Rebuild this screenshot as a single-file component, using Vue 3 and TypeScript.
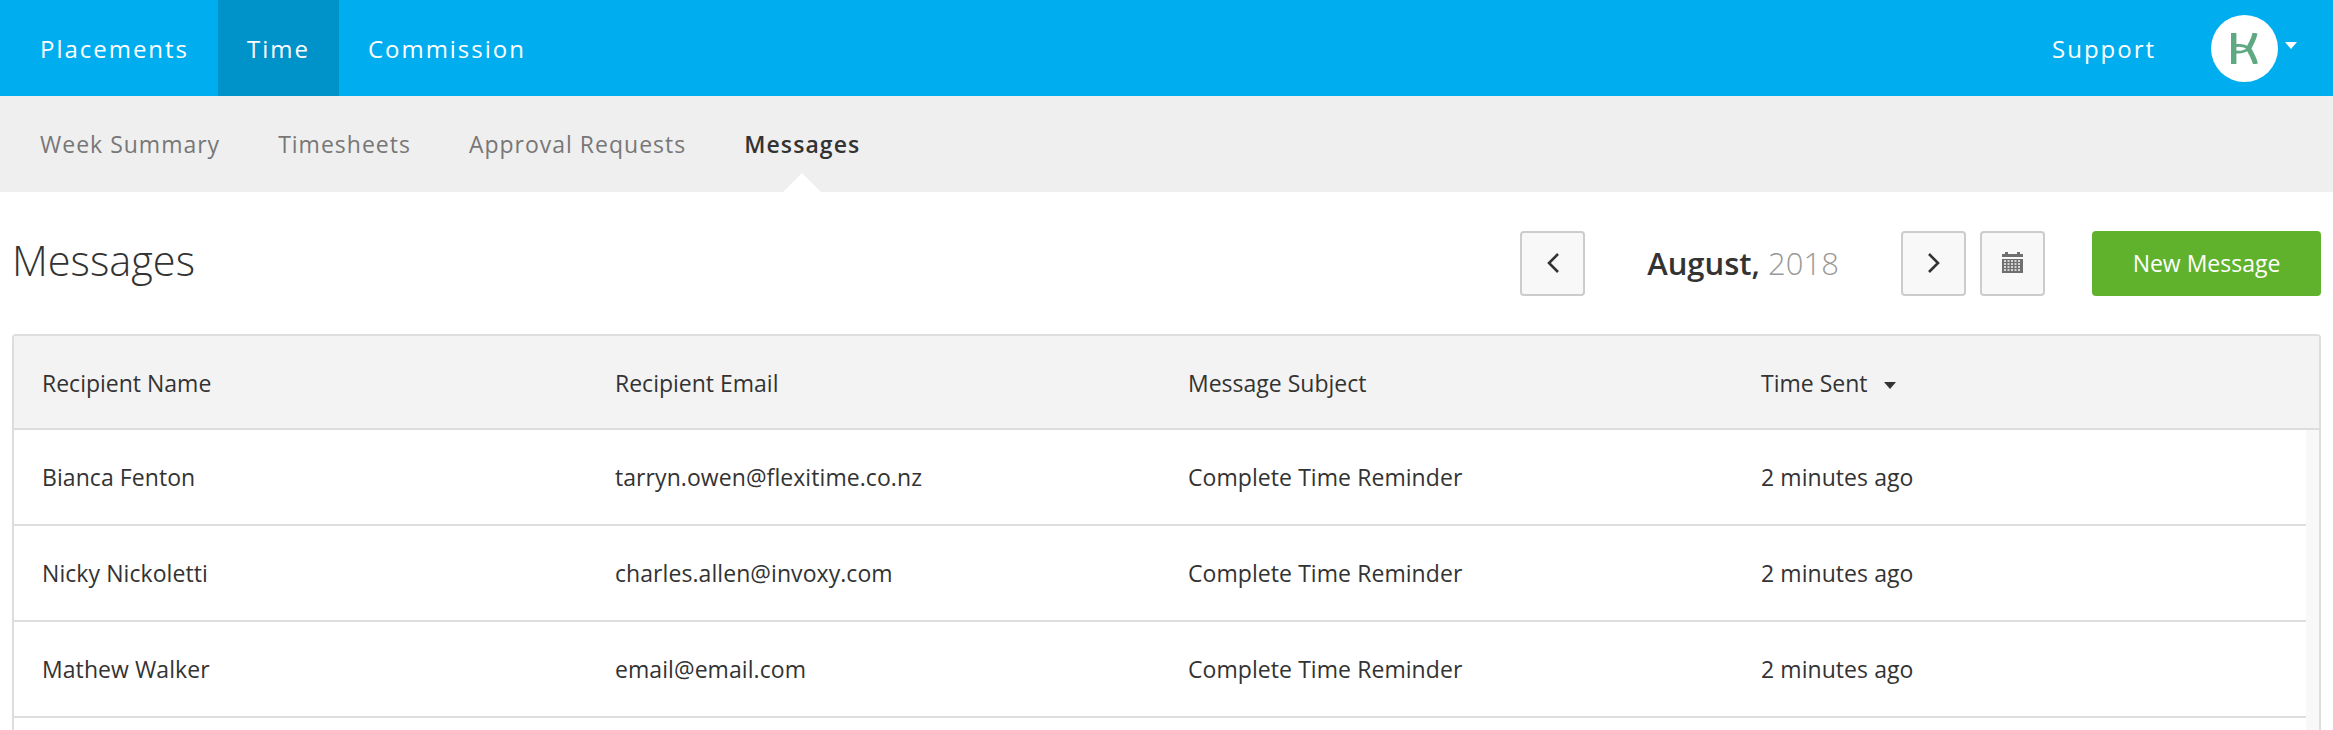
<script setup lang="ts">
interface Message { name: string; email: string; subject: string; sent: string }
const mainNav: { label: string; active?: boolean }[] = [
  { label: 'Placements' },
  { label: 'Time', active: true },
  { label: 'Commission' },
]
const subNav: { label: string; active?: boolean }[] = [
  { label: 'Week Summary' },
  { label: 'Timesheets' },
  { label: 'Approval Requests' },
  { label: 'Messages', active: true },
]
const columns = ['Recipient Name', 'Recipient Email', 'Message Subject']
const rows: Message[] = [
  { name: 'Bianca Fenton', email: 'tarryn.owen@flexitime.co.nz', subject: 'Complete Time Reminder', sent: '2 minutes ago' },
  { name: 'Nicky Nickoletti', email: 'charles.allen@invoxy.com', subject: 'Complete Time Reminder', sent: '2 minutes ago' },
  { name: 'Mathew Walker', email: 'email@email.com', subject: 'Complete Time Reminder', sent: '2 minutes ago' },
]
</script>

<template>
  <div class="page">
    <header class="topbar">
      <nav class="main-nav">
        <a v-for="item in mainNav" :key="item.label" class="main-link" :class="{ active: item.active }">{{ item.label }}</a>
      </nav>
      <div class="top-right">
        <a class="support">Support</a>
        <div class="avatar">
          <svg width="27" height="31" viewBox="0 0 27 31" fill="none" stroke="#5fa982">
            <path stroke-width="5.4" d="M2.7 0V31" />
            <path stroke-width="5" d="M24 0C23 6 20 11 17.5 15.5C20 20 23 25 24.5 31" />
            <path stroke-width="2.8" d="M18 15.5C14 12.5 9 12 5 12.5M18 15.5C14 18.5 9 19.5 5 19" />
          </svg>
        </div>
        <span class="avatar-caret"></span>
      </div>
    </header>
    <nav class="sub-nav">
      <a v-for="item in subNav" :key="item.label" class="sub-link" :class="{ active: item.active }">{{ item.label }}</a>
    </nav>
    <section class="toolbar">
      <h1 class="title">Messages</h1>
      <div class="controls">
        <button class="icon-btn" type="button" aria-label="Previous month">
          <svg width="14" height="24" viewBox="0 0 14 24" fill="none" stroke="#333" stroke-width="2.6"><path d="M12 3L3 12L12 21" /></svg>
        </button>
        <div class="period"><strong>August,</strong> <span>2018</span></div>
        <button class="icon-btn" type="button" aria-label="Next month">
          <svg width="14" height="24" viewBox="0 0 14 24" fill="none" stroke="#333" stroke-width="2.6"><path d="M2 3L11 12L2 21" /></svg>
        </button>
        <button class="icon-btn cal" type="button" aria-label="Calendar">
          <svg class="cal-icon" width="21" height="21" viewBox="0 0 21 21">
            <path fill="#6f6f6f" d="M0 2H3V0H6V2H15V0H18V2H21V5H0ZM0 7H21V21H0Z" />
            <path stroke="#f8f8f8" stroke-width="1.6" stroke-dasharray="2 1.5" fill="none" d="M2 9H19M2 12H19M2 15H19M2 18H19" />
          </svg>
        </button>
        <button class="new-btn" type="button">New Message</button>
      </div>
    </section>
    <section class="panel">
      <div class="row head">
        <div v-for="c in columns" :key="c" class="cell">{{ c }}</div>
        <div class="cell">Time Sent<span class="sort-caret"></span></div>
      </div>
      <div class="body">
        <div class="rows">
          <div v-for="r in rows" :key="r.email" class="row">
            <div class="cell">{{ r.name }}</div>
            <div class="cell">{{ r.email }}</div>
            <div class="cell">{{ r.subject }}</div>
            <div class="cell">{{ r.sent }}</div>
          </div>
        </div>
        <div class="track"></div>
      </div>
    </section>
  </div>
</template>

<style>
html, body { margin: 0; background: #fff; overflow: hidden; }
</style>

<style scoped>
.page { height: 730px; overflow: hidden; display: flex; flex-direction: column; font-family: "Open Sans", sans-serif; color: #333; }
.topbar { height: 96px; flex: none; background: #00aeef; display: flex; justify-content: space-between; }
.main-nav { display: flex; }
.main-link { height: 96px; padding: 0 29px 0 40px; line-height: 98px; color: #fff; font-size: 24px; letter-spacing: 1.98px; }
.main-link + .main-link { padding: 0 29px; }
.main-link.active { background: #0093c9; }
.top-right { display: flex; align-items: center; padding-right: 36px; }
.support { color: #fff; font-size: 24px; letter-spacing: 1.98px; margin-right: 55px; }
.avatar { width: 67px; height: 67px; border-radius: 50%; background: #fff; display: flex; align-items: center; justify-content: center; }
.avatar-caret { width: 0; height: 0; border: 6px solid transparent; border-top: 7px solid #fff; border-bottom: 0; margin-left: 7px; margin-top: -5px; }
.sub-nav { height: 96px; flex: none; background: #efefef; display: flex; gap: 58px; padding-left: 40px; align-items: center; }
.sub-link { position: relative; font-size: 23px; letter-spacing: 1px; color: #777; line-height: 96px; }
.sub-link.active { color: #333; font-weight: 600; letter-spacing: 1.1px; }
.sub-link.active::after { content: ""; position: absolute; left: 50%; bottom: 0; margin-left: -19px; border: 19px solid transparent; border-top: 0; border-bottom: 19px solid #fff; }
.toolbar { flex: none; height: 142px; display: flex; align-items: center; justify-content: space-between; padding: 0 12px; }
.title { margin: -6px 0 0; font-size: 41.5px; font-weight: 300; color: #333; }
.controls { display: flex; align-items: center; }
.icon-btn { width: 65px; height: 65px; box-sizing: border-box; border: 2px solid #ccc; border-radius: 4px; background: #f8f8f8; padding: 0; display: flex; align-items: center; justify-content: center; }
.cal { margin-left: 14px; }
.cal-icon { margin-bottom: 2px; }
.period { width: 316px; text-align: center; font-size: 31px; }
.period strong { font-weight: 600; color: #333; }
.period span { font-weight: 300; color: #999; }
.new-btn { width: 229px; height: 65px; margin-left: 47px; border: 0; border-radius: 4px; background: #60b22d; color: #fff; font: 400 23px "Open Sans", sans-serif; }
.panel { flex: 1; margin: 0 12px; border: 2px solid #ddd; border-bottom: 0; border-radius: 4px 4px 0 0; display: flex; flex-direction: column; min-height: 0; }
.row { display: grid; grid-template-columns: repeat(4, 1fr); align-items: center; height: 96px; box-sizing: border-box; border-bottom: 2px solid #ddd; font-size: 23px; letter-spacing: 0.07px; }
.head { height: 94px; padding-top: 2px; padding-right: 13px; background: #f3f3f3; flex: none; letter-spacing: 0; }
.cell { padding-left: 28px; }
.sort-caret { display: inline-block; width: 0; height: 0; margin-left: 16px; vertical-align: 3px; border: 6px solid transparent; border-top: 7px solid #333; border-bottom: 0; }
.body { flex: 1; display: flex; min-height: 0; }
.rows { flex: 1; }
.track { width: 13px; background: #f8f8f8; }
</style>
